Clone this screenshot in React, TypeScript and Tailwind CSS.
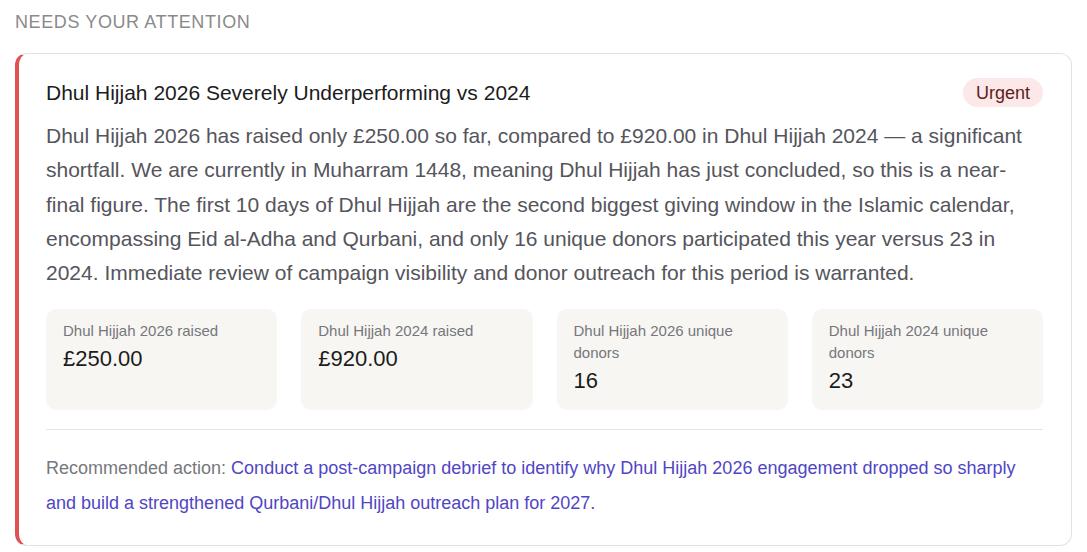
import React from 'react';

const stats = [
  { label: 'Dhul Hijjah 2026 raised', value: '£250.00' },
  { label: 'Dhul Hijjah 2024 raised', value: '£920.00' },
  { label: 'Dhul Hijjah 2026 unique donors', value: '16' },
  { label: 'Dhul Hijjah 2024 unique donors', value: '23' },
];

const App: React.FC = () => {
  return (
    <div className="min-h-screen bg-white px-[15px] pt-[10px] font-['Liberation_Sans',Arial,sans-serif]">
      <h2 className="text-[18px] leading-[24px] tracking-[0.6px] uppercase text-[#8a8a8a]">Needs your attention</h2>

      <div className="mt-[19px] rounded-xl border border-[#e2e2e2] border-l-4 border-l-[#e05252] bg-white pl-[27px] pr-[28px] pt-[24px] pb-[24px]">
        {/* Header */}
        <div className="flex items-center justify-between">
          <h3 className="text-[21px] leading-[28px] text-[#1c1c1c]">
            Dhul Hijjah 2026 Severely Underperforming vs 2024
          </h3>
          <span className="rounded-full bg-[#fce8e8] px-[13px] pt-[4px] pb-[2px] text-[18px] leading-[23px] text-[#5e1c1c]">
            Urgent
          </span>
        </div>

        <p className="mt-[12px] text-[21px] leading-[34.3px] text-[#55555c]">
          Dhul Hijjah 2026 has raised only £250.00 so far, compared to £920.00 in Dhul Hijjah 2024 — a significant
          shortfall. We are currently in Muharram 1448, meaning Dhul Hijjah has just concluded, so this is a near-final
          figure. The first 10 days of Dhul Hijjah are the second biggest giving window in the Islamic calendar,
          encompassing Eid al-Adha and Qurbani, and only 16 unique donors participated this year versus 23 in 2024.
          Immediate review of campaign visibility and donor outreach for this period is warranted.
        </p>

        {/* Stats */}
        <div className="mt-[19px] grid grid-cols-4 gap-[24px]">
          {stats.map((s) => (
            <div key={s.label} className="rounded-[10px] bg-[#f7f6f3] px-[17px] pt-[11px] pb-[12px]">
              <div className="text-[15px] leading-[22px] text-[#76767c]">{s.label}</div>
              <div className="text-[22px] leading-[34px] text-[#1c1c1c]">{s.value}</div>
            </div>
          ))}
        </div>

        <div className="mt-[19px] border-t border-[#e4e4e4] pt-[21px] text-[18px] leading-[35px]">
          <span className="text-[#77777c]">Recommended action: </span>
          <span className="text-[#5046c4]">
            Conduct a post-campaign debrief to identify why Dhul Hijjah 2026 engagement dropped so sharply and build a
            strengthened Qurbani/Dhul Hijjah outreach plan for 2027.
          </span>
        </div>
      </div>
    </div>
  );
};

export default App;
